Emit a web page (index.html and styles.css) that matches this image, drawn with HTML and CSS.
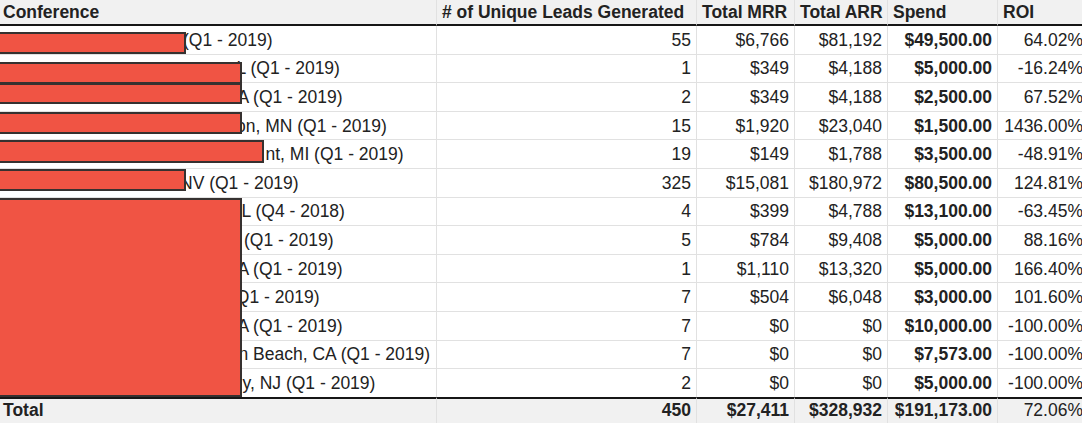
FILE: index.html
```html
<!DOCTYPE html>
<html lang="en">
<head>
<meta charset="utf-8">
<title>Conference ROI</title>
<link rel="stylesheet" href="styles.css">
</head>
<body>
<div class="sheet">
  <table class="grid">
    <colgroup>
      <col class="c-conf"><col class="c-leads"><col class="c-mrr"><col class="c-arr"><col class="c-spend"><col class="c-roi">
    </colgroup>
    <thead>
      <tr>
        <th class="conf">Conference</th>
        <th># of Unique Leads Generated</th>
        <th>Total MRR</th>
        <th>Total ARR</th>
        <th>Spend</th>
        <th>ROI</th>
      </tr>
    </thead>
    <tbody>
      <tr>
        <td class="conf"><div class="name"><span class="pre p1"></span><span>(Q1 - 2019)</span></div></td>
        <td class="num">55</td><td class="num">$6,766</td><td class="num">$81,192</td><td class="num b">$49,500.00</td><td class="num">64.02%</td>
      </tr>
      <tr>
        <td class="conf"><div class="name"><span class="pre p2"></span><span>L (Q1 - 2019)</span></div></td>
        <td class="num">1</td><td class="num">$349</td><td class="num">$4,188</td><td class="num b">$5,000.00</td><td class="num">-16.24%</td>
      </tr>
      <tr>
        <td class="conf"><div class="name"><span class="pre p3"></span><span>A (Q1 - 2019)</span></div></td>
        <td class="num">2</td><td class="num">$349</td><td class="num">$4,188</td><td class="num b">$2,500.00</td><td class="num">67.52%</td>
      </tr>
      <tr>
        <td class="conf"><div class="name"><span class="pre p4"></span><span>on, MN (Q1 - 2019)</span></div></td>
        <td class="num">15</td><td class="num">$1,920</td><td class="num">$23,040</td><td class="num b">$1,500.00</td><td class="num">1436.00%</td>
      </tr>
      <tr>
        <td class="conf"><div class="name"><span class="pre p5"></span><span>nt, MI (Q1 - 2019)</span></div></td>
        <td class="num">19</td><td class="num">$149</td><td class="num">$1,788</td><td class="num b">$3,500.00</td><td class="num">-48.91%</td>
      </tr>
      <tr>
        <td class="conf"><div class="name"><span class="pre p6"></span><span>NV (Q1 - 2019)</span></div></td>
        <td class="num">325</td><td class="num">$15,081</td><td class="num">$180,972</td><td class="num b">$80,500.00</td><td class="num">124.81%</td>
      </tr>
      <tr>
        <td class="conf"><div class="name"><span class="pre p7"></span><span>L (Q4 - 2018)</span></div></td>
        <td class="num">4</td><td class="num">$399</td><td class="num">$4,788</td><td class="num b">$13,100.00</td><td class="num">-63.45%</td>
      </tr>
      <tr>
        <td class="conf"><div class="name"><span class="pre p8"></span><span>(Q1 - 2019)</span></div></td>
        <td class="num">5</td><td class="num">$784</td><td class="num">$9,408</td><td class="num b">$5,000.00</td><td class="num">88.16%</td>
      </tr>
      <tr>
        <td class="conf"><div class="name"><span class="pre p9"></span><span>A (Q1 - 2019)</span></div></td>
        <td class="num">1</td><td class="num">$1,110</td><td class="num">$13,320</td><td class="num b">$5,000.00</td><td class="num">166.40%</td>
      </tr>
      <tr>
        <td class="conf"><div class="name"><span class="pre p10"></span><span>(Q1 - 2019)</span></div></td>
        <td class="num">7</td><td class="num">$504</td><td class="num">$6,048</td><td class="num b">$3,000.00</td><td class="num">101.60%</td>
      </tr>
      <tr>
        <td class="conf"><div class="name"><span class="pre p11"></span><span>A (Q1 - 2019)</span></div></td>
        <td class="num">7</td><td class="num">$0</td><td class="num">$0</td><td class="num b">$10,000.00</td><td class="num">-100.00%</td>
      </tr>
      <tr>
        <td class="conf"><div class="name"><span class="pre p12"></span><span>n Beach, CA (Q1 - 2019)</span></div></td>
        <td class="num">7</td><td class="num">$0</td><td class="num">$0</td><td class="num b">$7,573.00</td><td class="num">-100.00%</td>
      </tr>
      <tr>
        <td class="conf"><div class="name"><span class="pre p13"></span><span>y, NJ (Q1 - 2019)</span></div></td>
        <td class="num">2</td><td class="num">$0</td><td class="num">$0</td><td class="num b">$5,000.00</td><td class="num">-100.00%</td>
      </tr>
    </tbody>
    <tfoot>
      <tr>
        <td class="conf">Total</td>
        <td class="num">450</td><td class="num">$27,411</td><td class="num">$328,932</td><td class="num">$191,173.00</td><td class="num reg">72.06%</td>
      </tr>
    </tfoot>
  </table>
  <div class="redact rd1"></div>
  <div class="redact rd2"></div>
  <div class="redact rd3"></div>
  <div class="redact rd4"></div>
  <div class="redact rd5"></div>
  <div class="redact rd6"></div>
  <div class="redact rd7"></div>
</div>
</body>
</html>
```

FILE: styles.css
```css
html, body {
  margin: 0;
  padding: 0;
  background: #ffffff;
  overflow: hidden;
}

.sheet {
  position: relative;
  width: 1082px;
  height: 424px;
  overflow: hidden;
  font-family: "Liberation Sans", Arial, sans-serif;
  font-size: 17.5px;
  color: #222222;
}

.grid {
  border-collapse: separate;
  border-spacing: 0;
  table-layout: fixed;
  width: 1089px;
}

.c-conf { width: 437px; }
.c-leads { width: 260px; }
.c-mrr { width: 98px; }
.c-arr { width: 93px; }
.c-spend { width: 110px; }
.c-roi { width: 91px; }

.grid th,
.grid td {
  box-sizing: border-box;
  padding: 0 5px;
  border-right: 1px solid #e1e1e1;
  white-space: nowrap;
  overflow: hidden;
  vertical-align: middle;
}

.grid th {
  height: 26px;
  background: #f1f1f1;
  border-bottom: 2px solid #161616;
  font-weight: bold;
  text-align: left;
}

.grid tbody td {
  height: 28.6px;
  padding-top: 1px;
  border-bottom: 1px solid #e1e1e1;
}

.grid tbody tr:last-child td {
  border-bottom: none;
  height: 27.6px;
}

.grid tfoot td {
  height: 26px;
  background: #f1f1f1;
  border-top: 2px solid #161616;
  font-weight: bold;
}

.grid .conf {
  padding-left: 3px;
}

.num {
  text-align: right;
}

.b {
  font-weight: bold;
}

.grid tfoot td.reg {
  font-weight: normal;
}

.name {
  display: flex;
  align-items: center;
  white-space: nowrap;
}

.pre {
  flex: 0 0 auto;
  height: 1px;
}

.p1 { width: 180px; }
.p2 { width: 233.5px; }
.p3 { width: 234.5px; }
.p4 { width: 233px; }
.p5 { width: 262.5px; }
.p6 { width: 177px; }
.p7 { width: 238.5px; }
.p8 { width: 241px; }
.p9 { width: 234.5px; }
.p10 { width: 227px; }
.p11 { width: 234.5px; }
.p12 { width: 235.5px; }
.p13 { width: 239.5px; }

.redact {
  position: absolute;
  left: -2px;
  box-sizing: border-box;
  background: #f05444;
  border: 2px solid #363130;
}

.rd1 { top: 32px; width: 188px; height: 22px; }
.rd2 { top: 62px; width: 244px; height: 22px; }
.rd3 { top: 83px; width: 244px; height: 21px; }
.rd4 { top: 112px; width: 244px; height: 22px; }
.rd5 { top: 140px; width: 266px; height: 23px; }
.rd6 { top: 169px; width: 188px; height: 22px; }
.rd7 { top: 198px; width: 244px; height: 199px; }
```
